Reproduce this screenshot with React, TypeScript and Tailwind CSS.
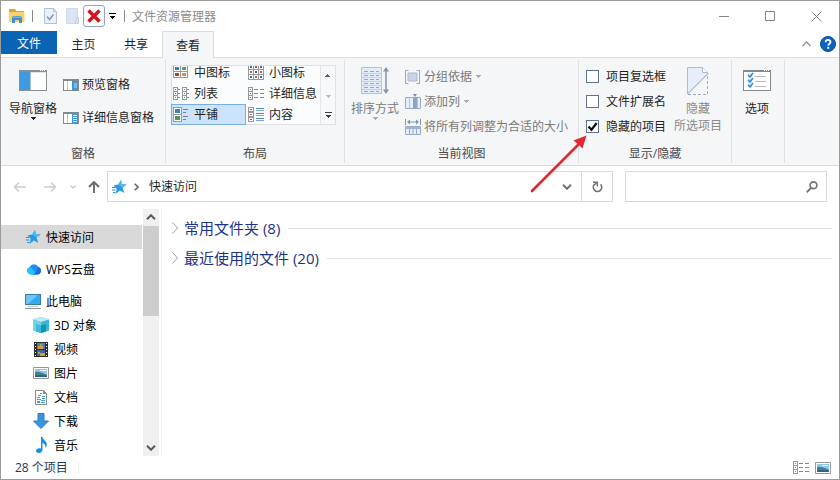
import { useState } from "react";
import type { ReactNode } from "react";

/* ---------- title bar ---------- */

function FolderIcon() {
  return (
    <svg width="16" height="14" viewBox="0 0 16 14">
      <path d="M0 0h6l1.500 2H15v4H0z" fill="#e0a22f" />
      <path d="M0 3h15.500v10H0z" fill="#fbd265" />
      <path d="M3 14V9a2 2 0 0 1 2-2h6a2 2 0 0 1 2 2v5h-3v-3H6v3z" fill="#3f8fce" />
      <path d="M4 7.500h8v1.500H4z" fill="#6fb4e6" />
    </svg>
  );
}

function CheckedPageIcon() {
  return (
    <svg width="13" height="16" viewBox="0 0 13 16" fill="none">
      <path d="M.5.5h9l3 3v12H.5z" fill="#e9f0fa" stroke="#b3c0d6" />
      <path d="M9.500.5v3h3" stroke="#b3c0d6" />
      <path d="M3 8.500l2.500 3 4-5" stroke="#8796b8" strokeWidth="1.500" />
    </svg>
  );
}

function BlankPageIcon() {
  return (
    <svg width="14" height="16" viewBox="0 0 14 16" fill="none">
      <path d="M.5.5h11v15H.5z" fill="#dbe4f2" stroke="#cfd9ea" />
      <path d="M10.500 9.500h2v6h-3z" fill="#dbe4f2" stroke="#c3cfe2" />
    </svg>
  );
}

function TitleBar() {
  const control = "flex h-full w-[46px] items-center justify-center";
  return (
    <header className="flex h-[30px] items-center">
      <div className="flex flex-1 items-center pl-2">
        <FolderIcon />
        <span className="ml-[7px] h-3 w-px bg-[#8d8d8d]" />
        <button aria-label="属性" className="ml-[11px]">
          <CheckedPageIcon />
        </button>
        <button aria-label="新建文件夹" className="ml-[9px]">
          <BlankPageIcon />
        </button>
        <button
          aria-label="删除"
          className="ml-[3px] flex size-[22px] items-center justify-center rounded-[3px] border border-[#8fa6c4] bg-white"
        >
          <svg width="14" height="14" viewBox="0 0 14 14">
            <path d="M1.500 1.500l11 11M12.500 1.500l-11 11" stroke="#d6101c" strokeWidth="3.400" />
          </svg>
        </button>
        <button aria-label="自定义快速访问工具栏" className="ml-1">
          <svg width="7" height="6" viewBox="0 0 7 6" shapeRendering="crispEdges">
            <path d="M0 0h7v1H0zM1 3h5v1H1zM2 4h3v1H2zM3 5h1v1H3z" fill="#000" />
          </svg>
        </button>
        <span className="ml-2 h-3 w-px bg-[#8d8d8d]" />
        <h1 className="ml-[7px] text-[#8b8b8b]">文件资源管理器</h1>
      </div>
      <button aria-label="最小化" className={control}>
        <svg width="11" height="11" viewBox="0 0 11 11">
          <path d="M0 5.500h10" stroke="#858585" />
        </svg>
      </button>
      <button aria-label="最大化" className={control}>
        <svg width="11" height="11" viewBox="0 0 11 11">
          <path d="M.5.5h9v9H.5z" fill="none" stroke="#858585" />
        </svg>
      </button>
      <button aria-label="关闭" className={control}>
        <svg width="11" height="11" viewBox="0 0 11 11">
          <path d="M.5.5l10 10M10.500.5l-10 10" stroke="#858585" />
        </svg>
      </button>
    </header>
  );
}

function TabBar() {
  return (
    <nav className="flex h-[27px] border-b border-[#dadbdc]">
      <button className="h-[23px] w-14 bg-[#0b63b4] pt-px text-white">文件</button>
      <button className="h-[26px] w-[53px]">主页</button>
      <button className="h-[26px] w-[52px]">共享</button>
      <button className="-mb-px w-[52px] border border-b-0 border-[#dadbdc] bg-[#f5f6f7]">查看</button>
      <span className="flex-1" />
      <button aria-label="最小化功能区" className="mr-[9px]">
        <svg width="9" height="6" viewBox="0 0 9 6">
          <path d="M.5 5l4-4 4 4" fill="none" stroke="#979797" strokeWidth="1.500" />
        </svg>
      </button>
      <button aria-label="帮助" className="mr-[3px]">
        <svg width="16" height="16" viewBox="0 0 16 16">
          <circle cx="8" cy="8" r="7.500" fill="#0c62c0" stroke="#0a4c98" />
          <path
            d="M5.700 6.200c0-3 4.800-3 4.800-.2 0 1.700-2.300 1.700-2.300 3.600"
            fill="none"
            stroke="#fff"
            strokeWidth="1.800"
          />
          <path d="M7.200 10.900h2v1.900h-2z" fill="#fff" />
        </svg>
      </button>
    </nav>
  );
}

/* ---------- ribbon ---------- */

function NavPaneIcon() {
  return (
    <svg width="28" height="21" viewBox="0 0 28 21" shapeRendering="crispEdges">
      <path d="M0 0h28v21H0z" fill="#8b8f92" />
      <path d="M1 2h26v18H1z" fill="#fff" />
      <path d="M1 2h10v18H1z" fill="#3e9be0" />
      <path d="M11 2h1v18h-1z" fill="#a9bfd0" />
      <path d="M12 2h15v1H12z" fill="#e4e7ea" />
      <path d="M21 0h1v1h-1zM23 0h1v1h-1zM25 0h1v1h-1z" fill="#fff" />
    </svg>
  );
}

function SidePaneIcon({ lined = false }: { lined?: boolean }) {
  return (
    <svg width="16" height="12" viewBox="0 0 16 12" shapeRendering="crispEdges">
      <path d="M0 0h16v12H0z" fill="#85898d" />
      <path d="M1 2h14v9H1z" fill="#fff" />
      <path d="M4 2h1v9H4z" fill="#bcc1c6" />
      <path d="M9 2h6v9H9z" fill="#3e97dc" />
      {lined ? (
        <path d="M10 3h4v1h-4zM10 5h4v1h-4zM10 7h4v1h-4zM10 9h4v1h-4z" fill="#e3f2fc" />
      ) : (
        <path d="M11 4h3v5h-3z" fill="#77bbee" />
      )}
    </svg>
  );
}

function Caret({ color = "#222" }: { color?: string }) {
  return (
    <svg width="5" height="3" viewBox="0 0 5 3" shapeRendering="crispEdges">
      <path d="M0 0h5v1H0zM1 1h3v1H1zM2 2h1v1H2z" fill={color} />
    </svg>
  );
}

type Layout = "medium" | "small" | "list" | "details" | "tiles" | "content";

function Frame({ x, y, w, h, fill }: { x: number; y: number; w: number; h: number; fill: string }) {
  return (
    <g>
      <rect x={x} y={y} width={w} height={h} fill="#96999c" />
      <rect x={x + 1} y={y + 1} width={w - 2} height={h - 2} fill="#fff" />
      <rect x={x + 2} y={y + 2} width={w - 4} height={h - 4} fill={fill} />
    </g>
  );
}

function LayoutIcon({ kind }: { kind: Layout }) {
  return (
    <svg width="16" height="15" viewBox="0 0 16 15" shapeRendering="crispEdges" className="shrink-0">
      {kind === "medium" && (
        <g>
          <Frame x={0} y={0} w={8} h={7} fill="#3b7fb5" />
          <Frame x={7} y={0} w={8} h={7} fill="#5e9a62" />
          <Frame x={0} y={6} w={8} h={7} fill="#c0392b" />
          <Frame x={7} y={6} w={8} h={7} fill="#c99a3b" />
        </g>
      )}
      {kind === "small" &&
        [0, 5, 10].map((y) =>
          [0, 5, 10].map((x) => (
            <Frame key={`${x}-${y}`} x={x} y={y - 1} w={6} h={6} fill={(x + y) % 10 ? "#c0504a" : "#3f6f9e"} />
          )),
        )}
      {kind === "list" &&
        [0, 9].map((x) => (
          <g key={x}>
            {[1, 5, 9].map((y) => (
              <Frame key={y} x={x} y={y} w={5} h={5} fill="#6e7a86" />
            ))}
            <path d={`M${x + 5} 3h2v1h-2zM${x + 5} 7h2v1h-2zM${x + 5} 11h2v1h-2z`} fill="#85898d" />
          </g>
        ))}
      {kind === "details" && (
        <g>
          {[1, 5, 9].map((y) => (
            <Frame key={y} x={0} y={y} w={5} h={5} fill="#6e7a86" />
          ))}
          {[3, 7, 11].map((y) => (
            <path key={y} d={`M6 ${y}h4v1H6zM12 ${y}h4v1h-4z`} fill="#85898d" />
          ))}
        </g>
      )}
      {kind === "tiles" && (
        <g>
          <Frame x={0} y={0} w={9} h={8} fill="#3c83bd" />
          <Frame x={0} y={7} w={9} h={8} fill="#5b9450" />
          <path d="M10 2h5v1h-5zM10 5h3v1h-3zM10 9h5v1h-5zM10 12h3v1h-3z" fill="#75818c" />
        </g>
      )}
      {kind === "content" && (
        <g>
          <Frame x={0} y={0} w={6} h={5} fill="#3c6d9d" />
          <Frame x={0} y={5} w={6} h={5} fill="#b0473f" />
          <Frame x={0} y={10} w={6} h={5} fill="#3c6d9d" />
          <path d="M8 1h8v1H8zM8 6h8v1H8zM8 11h8v1H8z" fill="#4d87c0" />
          <path d="M8 3h8v1H8zM8 8h8v1H8zM8 13h8v1H8z" fill="#7ea6cd" />
        </g>
      )}
    </svg>
  );
}

function SortIcon() {
  return (
    <svg width="28" height="28" viewBox="0 0 28 28" fill="none">
      <path d="M.5.5h20v26H.5z" fill="#e3edfa" stroke="#b4c3dd" />
      <path d="M1 6.500h19M1 10.500h19M1 14.500h19M1 18.500h19M1 22.500h19" stroke="#c3d0e6" />
      <path
        d="M3 4.500h4m2 0h4m2 0h3M3 8.500h4m2 0h4m2 0h3M3 12.500h4m2 0h4m2 0h3M3 16.500h4m2 0h4m2 0h3M3 20.500h4m2 0h4m2 0h3M3 24.500h4m2 0h4m2 0h3"
        stroke="#93a6ca"
      />
      <path d="M25 3v21" stroke="#8793a8" strokeWidth="1.500" />
      <path d="M22 4.500L25 0l3 4.500zM22 22.500l3 4.500 3-4.500z" fill="#8793a8" />
    </svg>
  );
}

function GroupByIcon() {
  return (
    <svg width="15" height="14" viewBox="0 0 15 14" fill="none">
      <path d="M3.500.5h-3v13h3M11.500.5h3v13h-3" stroke="#9aa7bf" />
      <path d="M3 3h9v8H3z" fill="#c6d3e8" stroke="#aab9d3" />
    </svg>
  );
}

function AddColumnIcon() {
  return (
    <svg width="16" height="15" viewBox="0 0 16 15" fill="none">
      <path d="M.5 3.500h15v11H.5z" fill="#e6eefa" stroke="#9aabc9" />
      <path d="M4.500 4v10M12.500 4v10" stroke="#b6c4dc" />
      <path d="M8 4h4v10H8z" fill="#8ea3c8" />
      <path d="M8 0h4l-2 3z" fill="#7f8ba1" />
    </svg>
  );
}

function FitColumnsIcon() {
  return (
    <svg width="16" height="16" viewBox="0 0 16 16" fill="none">
      <path d="M.5 0v6M15.500 0v6M3 3h10" stroke="#8391ab" />
      <path d="M5 .5L2 3l3 2.500zM11 .5L14 3l-3 2.500z" fill="#8391ab" />
      <path d="M.5 7.500h15v8H.5z" fill="#e6eefa" stroke="#9aabc9" />
      <path d="M1 9h14" stroke="#9db2d6" strokeWidth="2" />
      <path d="M4.500 10v5M8 10v5M11.500 10v5" stroke="#9aabc9" />
    </svg>
  );
}

function HidePageIcon() {
  return (
    <svg width="22" height="28" viewBox="0 0 22 28" fill="none">
      <path d="M.5 27V.5h15l5 5V8L1 27z" fill="#e6eefa" />
      <path d="M.5 27V.5h15l5 5V7" stroke="#aebcd6" />
      <path d="M15.500.5v5h5" fill="#fff" stroke="#aebcd6" />
      <path d="M21 6.500L.5 27" stroke="#8f9db8" />
      <path d="M20.500 9v18.500H1" stroke="#9fabc0" strokeDasharray="3 2" />
    </svg>
  );
}

function OptionsIcon() {
  return (
    <svg width="28" height="21" viewBox="0 0 28 21" fill="none">
      <path d="M0 0h28v21H0z" fill="#85898d" />
      <path d="M1 2h26v18H1z" fill="#fff" />
      <path d="M21 .5h1M23 .5h1M25 .5h1" stroke="#fff" />
      <path d="M5 3.500h4v4H5zM5 8.500h4v4H5zM5 13.500h4v4H5z" fill="#c4e0f5" />
      <path d="M5 5l2 2 3-4M5 10l2 2 3-4M5 15l2 2 3-4" stroke="#2f86cc" strokeWidth="1.400" />
      <path d="M12 6.500h11M12 11.500h11M12 16.500h11" stroke="#b9bdc1" />
    </svg>
  );
}

function Group({ title, className, children }: { title?: string; className: string; children: ReactNode }) {
  return (
    <section className={`my-[2px] flex shrink-0 flex-col border-r border-[#e0e1e3] ${className}`}>
      <div className="flex h-[85px] items-start">{children}</div>
      <h2 className="text-center text-[#4a4a4a]">{title}</h2>
    </section>
  );
}

const layouts: { kind: Layout; label: string }[] = [
  { kind: "medium", label: "中图标" },
  { kind: "small", label: "小图标" },
  { kind: "list", label: "列表" },
  { kind: "details", label: "详细信息" },
  { kind: "tiles", label: "平铺" },
  { kind: "content", label: "内容" },
];

function LayoutGallery() {
  const [selected, setSelected] = useState<Layout>("tiles");
  return (
    <div className="ml-[5px] mt-[5px] flex h-[60px] w-[165px] border border-[#dfe1e4] bg-[#fbfcfd]">
      <div className="-mb-px -ml-px flex flex-1 flex-col justify-end overflow-hidden">
        <div className="grid grid-cols-[75px_1fr]">
          {layouts.map(({ kind, label }) => (
            <button
              key={kind}
              onClick={() => setSelected(kind)}
              className={`flex h-[21px] items-center gap-[5px] whitespace-nowrap border pl-px ${
                kind === selected ? "border-[#7aaee0] bg-[#cce4fb]" : "border-transparent"
              }`}
            >
              <LayoutIcon kind={kind} />
              {label}
            </button>
          ))}
        </div>
      </div>
      <div className="flex w-[15px] flex-col border-l border-[#e3e5e8] bg-[#f7f8f9]">
        <button aria-label="上一行" className="flex h-5 rotate-180 items-center justify-center">
          <Caret color="#5b6169" />
        </button>
        <button aria-label="下一行" className="flex h-5 items-center justify-center">
          <Caret color="#b9bcc1" />
        </button>
        <button aria-label="其他" className="flex h-[18px] items-center justify-center">
          <svg width="7" height="6" viewBox="0 0 7 6" shapeRendering="crispEdges">
            <path d="M0 0h7v1H0zM1 3h5v1H1zM2 4h3v1H2zM3 5h1v1H3z" fill="#3a3f46" />
          </svg>
        </button>
      </div>
    </div>
  );
}

function ToggleOption({ label, initial = false }: { label: string; initial?: boolean }) {
  const [on, setOn] = useState(initial);
  return (
    <label className="flex h-[25px] items-center gap-[7px] whitespace-nowrap">
      <span className="grid size-[13px]">
        <input
          type="checkbox"
          checked={on}
          onChange={() => setOn(!on)}
          className="col-start-1 row-start-1 size-[13px] appearance-none border border-[#5f7390] bg-white"
        />
        {on && (
          <svg width="13" height="13" viewBox="0 0 13 13" className="pointer-events-none col-start-1 row-start-1">
            <path d="M2.500 6.500l3 3.200L10.700 3" fill="none" stroke="#111" strokeWidth="2.200" />
          </svg>
        )}
      </span>
      {label}
    </label>
  );
}

function Ribbon() {
  const big = "flex flex-col items-center whitespace-nowrap";
  const dim = "flex h-[25px] items-center whitespace-nowrap text-[#7a7a7a]";
  return (
    <div className="flex h-[108px] border-b border-[#d8d9da] bg-[#f5f6f7]">
      <Group title="窗格" className="w-[165px]">
        <button className={`${big} ml-2 mt-[10px]`}>
          <NavPaneIcon />
          <span className="mt-[9px]">导航窗格</span>
          <Caret />
        </button>
        <div className="ml-[6px] mt-2 flex flex-col">
          <button className="flex h-[33px] items-center gap-[3px]">
            <SidePaneIcon />
            预览窗格
          </button>
          <button className="flex h-[33px] items-center gap-[3px]">
            <SidePaneIcon lined />
            详细信息窗格
          </button>
        </div>
      </Group>
      <Group title="布局" className="w-[179px]">
        <LayoutGallery />
      </Group>
      <Group title="当前视图" className="w-[234px]">
        <button disabled className={`${big} ml-[6px] mt-[7px] text-[#7a7a7a]`}>
          <SortIcon />
          <span className="mt-[5px]">排序方式</span>
          <Caret color="#a9abae" />
        </button>
        <div className="ml-[6px] mt-1 flex flex-col items-start">
          <button disabled className={`${dim} gap-1`}>
            <GroupByIcon />
            分组依据
            <Caret color="#a9abae" />
          </button>
          <button disabled className={`${dim} gap-[3px]`}>
            <AddColumnIcon />
            <span className="mr-px">添加列</span>
            <Caret color="#a9abae" />
          </button>
          <button disabled className={`${dim} gap-[3px]`}>
            <FitColumnsIcon />
            将所有列调整为合适的大小
          </button>
        </div>
      </Group>
      <Group title="显示/隐藏" className="w-[153px]">
        <div className="ml-[7px] mt-1 flex flex-col">
          <ToggleOption label="项目复选框" />
          <ToggleOption label="文件扩展名" />
          <ToggleOption label="隐藏的项目" initial />
        </div>
        <button disabled className={`${big} ml-2 mt-[7px] text-[#8a8a8a]`}>
          <HidePageIcon />
          <span className="mt-[5px]">隐藏</span>
          <span>所选项目</span>
        </button>
      </Group>
      <Group className="w-[53px]">
        <button className={`${big} ml-[11px] mt-[10px]`}>
          <OptionsIcon />
          <span className="mt-[9px]">选项</span>
        </button>
      </Group>
    </div>
  );
}

/* ---------- address row ---------- */

function StarIcon() {
  return (
    <svg width="15" height="14" viewBox="0 0 15 14">
      <path d="M9 0l.8 4.200 4.700.3-4 3 1.700 5.500-4.400-2.500L3.500 14l1.300-5L1.500 5.500l4.700-1z" fill="#259be6" />
      <path d="M9 0l.8 4.200 4.700.3-4 3L6.200 4.500z" fill="#4fb9f4" />
      <path d="M0 7.500h3M0 10h3.500M1 12.500h2.500" stroke="#2f8fd4" />
    </svg>
  );
}

function Chevron({ color, weight = 2 }: { color: string; weight?: number }) {
  return (
    <svg width="10" height="6" viewBox="0 0 10 6">
      <path d="M1 .8l4 4 4-4" fill="none" stroke={color} strokeWidth={weight} />
    </svg>
  );
}

function AddressRow() {
  return (
    <div className="flex h-[43px] px-3 pt-[5px]">
      <div className="flex h-[31px] items-center">
        <button disabled aria-label="后退">
          <svg width="14" height="10" viewBox="0 0 14 10" fill="none">
            <path d="M6 .5L1.500 5 6 9.500M1.500 5H13" stroke="#cdcdcd" strokeWidth="1.500" />
          </svg>
        </button>
        <button disabled aria-label="前进" className="ml-4">
          <svg width="14" height="10" viewBox="0 0 14 10" fill="none">
            <path d="M8 .5L12.500 5 8 9.500M1 5h11.500" stroke="#cdcdcd" strokeWidth="1.500" />
          </svg>
        </button>
        <button disabled aria-label="最近浏览的位置" className="ml-[13px]">
          <svg width="6" height="4" viewBox="0 0 6 4" fill="none">
            <path d="M.5.5L3 3 5.500.5" stroke="#cdcdcd" strokeWidth="1.300" />
          </svg>
        </button>
        <button aria-label="上移" className="ml-3">
          <svg width="12" height="12" viewBox="0 0 12 12" fill="none">
            <path d="M1 6l5-5 5 5M6 1v11" stroke="#6a6a6a" strokeWidth="1.900" />
          </svg>
        </button>
      </div>
      <div className="ml-[7px] flex h-[31px] flex-1 border border-[#d9d9d9]">
        <div className="flex flex-1 items-center pl-1">
          <StarIcon />
          <svg width="5" height="8" viewBox="0 0 5 8" className="ml-[7px]">
            <path d="M.7.8L4 4 .7 7.200" fill="none" stroke="#666" strokeWidth="1.600" />
          </svg>
          <button className="ml-[10px]">快速访问</button>
        </div>
        <button aria-label="以前的位置" className="flex w-7 items-center justify-center">
          <Chevron color="#747474" />
        </button>
        <button
          aria-label="刷新"
          className="flex w-[31px] items-center justify-center border-l border-[#d9d9d9]"
        >
          <svg width="11" height="12" viewBox="0 0 11 12" fill="none">
            <path d="M2.600 3.200A4.200 4.200 0 1 0 8.600 3.400" stroke="#747474" strokeWidth="1.600" />
            <path d="M1 1.200h4.300v4.300" stroke="#747474" strokeWidth="1.500" />
            <path d="M5.300 1.200L2.500 3.800" stroke="#747474" strokeWidth="1.300" />
          </svg>
        </button>
      </div>
      <div className="ml-3 flex h-[31px] w-[202px] items-center border border-[#d9d9d9]">
        <input type="search" aria-label="搜索" className="h-full min-w-0 flex-1 px-2 outline-none" />
        <button aria-label="开始搜索" className="mr-2">
          <svg width="12" height="12" viewBox="0 0 12 12" fill="none">
            <circle cx="7.500" cy="4.300" r="3.400" stroke="#747474" strokeWidth="1.700" />
            <path d="M5 7L.7 11.300" stroke="#747474" strokeWidth="1.900" />
          </svg>
        </button>
      </div>
    </div>
  );
}

/* ---------- navigation tree ---------- */

function CloudIcon() {
  return (
    <svg width="15" height="12" viewBox="0 0 14 12" preserveAspectRatio="none">
      <path d="M4 11.500a4 4 0 0 1-.6-7.500 4.300 4.300 0 0 1 8-.2A4 4 0 0 1 10.500 11.500z" fill="#1f8ff5" />
      <path d="M4 11.500a4 4 0 0 1-.6-7.500c2.600.2 3.600 5 7 7.500z" fill="#22c3f2" />
      <path d="M6 11.500c3.500-1 4.500-4 5.400-7.700a4 4 0 0 1-.9 7.700z" fill="#2464e8" />
    </svg>
  );
}

function ComputerIcon() {
  return (
    <svg width="16" height="15" viewBox="0 0 16 15">
      <path d="M0 0h16v11H0z" fill="#3a78a8" />
      <path d="M1 1h14v9H1z" fill="#36a9ee" />
      <path d="M1 1h12L3 10H1z" fill="#6cc6f7" />
      <path d="M3 12h10v1H3z" fill="#c3c9ce" />
      <path d="M0 14.500h16" stroke="#8b949c" />
    </svg>
  );
}

function CubeIcon() {
  return (
    <svg width="16" height="16" viewBox="0 0 16 16">
      <path d="M8 0l8 2.500v11L8 16l-8-2.500v-11z" fill="#35b6d2" />
      <path d="M8 0L0 2.500 8 5l8-2.500z" fill="#bfeaf2" />
      <path d="M0 2.500L8 5v11l-8-2.500z" fill="#74d2e4" />
      <path d="M3 7l5 1.500V16l-5-1.500z" fill="#3dbad6" />
      <path d="M8 8.500L13 7v7.500L8 16z" fill="#1592b4" />
    </svg>
  );
}

function FilmIcon() {
  return (
    <svg width="14" height="15" viewBox="0 0 14 15" shapeRendering="crispEdges">
      <path d="M0 0h14v15H0z" fill="#2b2b2b" />
      <path d="M3 1h8v6H3z" fill="#4a7cc4" />
      <path d="M3 8h8v6H3z" fill="#3d65a8" />
      <path d="M4 4h5v3H4zM6 11h5v3H6z" fill="#d89b3c" />
      <path d="M6 2h2v2H6zM4 10h2v2H4z" fill="#8bb457" />
      {[1, 4, 7, 10, 13].map((y) => (
        <path key={y} d={`M1 ${y}h1v1H1zM12 ${y}h1v1h-1z`} fill="#fff" />
      ))}
    </svg>
  );
}

function PictureIcon() {
  return (
    <svg width="16" height="12" viewBox="0 0 16 12">
      <path d="M.5.5h15v11H.5z" fill="#fff" stroke="#969696" />
      <path d="M2 2h12v8H2z" fill="#8ec8ee" />
      <path d="M2 5c4-1 8 1 12 3v2H2z" fill="#467f86" />
      <path d="M2 8.500c4-1 8-.5 12 0V10H2z" fill="#2d5f94" />
      <path d="M7 3h6v1H7z" fill="#e8f5fd" />
    </svg>
  );
}

function DocumentIcon() {
  return (
    <svg width="12" height="15" viewBox="0 0 12 15" shapeRendering="crispEdges">
      <path d="M0 0h9v1h1v1h1v1h1v12H0z" fill="#8d8d8d" />
      <path d="M1 1h7v3h3v10H1z" fill="#fff" />
      <path d="M5 3h2v1H5zM3 5h3v1H3zM2 7h3v1H2zM7 6h3v1H7zM7 8h3v1H7zM2 9h4v1H2zM2 11h3v2H2zM6 10h4v1H6zM6 12h4v1H6z" fill="#3f9bd8" />
    </svg>
  );
}

function DownloadIcon() {
  return (
    <svg width="16" height="16" viewBox="0 0 16 16">
      <path d="M5 .5h6V8h4.500L8 15.500.5 8H5z" fill="#3a94de" stroke="#2d7cc2" />
    </svg>
  );
}

function MusicIcon() {
  return (
    <svg width="11" height="16" viewBox="0 0 11 16">
      <path d="M5 0h1.500c.3 3 4.500 4 4.300 7.500 0 1.700-.8 3-1.600 3.500.8-3-.7-4.500-2.700-5v7c0 3.500-6.500 4.200-6.500.8 0-2.300 3-3.200 5-2.300z" fill="#1592e6" />
    </svg>
  );
}

const places: { label: string; icon: ReactNode; style: string; active?: boolean }[] = [
  { label: "快速访问", icon: <StarIcon />, style: "pl-6 mb-2 bg-[#d9d9d9]", active: true },
  { label: "WPS云盘", icon: <CloudIcon />, style: "pl-6 mb-2" },
  { label: "此电脑", icon: <ComputerIcon />, style: "pl-6" },
  { label: "3D 对象", icon: <CubeIcon />, style: "pl-8" },
  { label: "视频", icon: <FilmIcon />, style: "pl-8" },
  { label: "图片", icon: <PictureIcon />, style: "pl-8" },
  { label: "文档", icon: <DocumentIcon />, style: "pl-8" },
  { label: "下载", icon: <DownloadIcon />, style: "pl-8" },
  { label: "音乐", icon: <MusicIcon />, style: "pl-8" },
];

function Sidebar() {
  return (
    <aside className="flex w-[161px] shrink-0 border-r border-[#f1f1f1]">
      <ul className="flex-1 overflow-hidden pt-4">
        {places.map(({ label, icon, style, active }) => (
          <li key={label}>
            <button
              aria-current={active ? "page" : undefined}
              className={`flex h-6 w-full items-center gap-[5px] text-black ${style}`}
            >
              <span className="flex w-4 justify-center">{icon}</span>
              {label}
            </button>
          </li>
        ))}
      </ul>
      <div className="ml-px mr-[2px] flex w-4 flex-col bg-[#f0f0f0]">
        <button aria-label="向上滚动" className="flex h-[17px] rotate-180 items-center justify-center">
          <Chevron color="#5a5a5a" />
        </button>
        <div className="h-[90px] bg-[#cdcdcd]" />
        <span className="flex-1" />
        <button aria-label="向下滚动" className="flex h-[17px] items-center justify-center">
          <Chevron color="#5a5a5a" />
        </button>
      </div>
    </aside>
  );
}

function Section({ label }: { label: string }) {
  return (
    <button className="flex h-[30px] w-full items-center text-[15px] text-[#1e3287]">
      <svg width="6" height="12" viewBox="0 0 6 12">
        <path d="M.5.5L5.500 6 .5 11.500" fill="none" stroke="#9a9a9a" />
      </svg>
      <span className="ml-[6px]">{label}</span>
      <span className="ml-2 h-px flex-1 bg-[#e2e2e2]" />
    </button>
  );
}

function StatusBar() {
  return (
    <footer className="flex h-[23px] items-center pl-[14px] pr-2">
      <span className="text-[#1e395b]">28 个项目</span>
      <span className="ml-[10px] h-3 w-px bg-[#f0f0f0]" />
      <span className="flex-1" />
      <button aria-label="详细信息视图">
        <LayoutIcon kind="details" />
      </button>
      <button aria-label="缩略图视图" className="ml-[6px]">
        <PictureIcon />
      </button>
    </footer>
  );
}

function PointerArrow() {
  return (
    <svg width="60" height="60" viewBox="0 0 60 60" className="pointer-events-none absolute left-[528px] top-[133px]">
      <path d="M3 57L50 10" stroke="#e32630" strokeWidth="2.600" strokeLinecap="round" />
      <path d="M57.500 1.500l-4 13-4-4-5-4z" fill="#e32630" />
    </svg>
  );
}

export default function App() {
  return (
    <div className="relative flex h-screen flex-col overflow-hidden border border-[#9b9b9b] bg-white font-['Open_Sans','Noto_Sans_CJK_SC',sans-serif] text-[12px] leading-[17px] text-[#1f1f1f]">
      <TitleBar />
      <TabBar />
      <Ribbon />
      <AddressRow />
      <div className="flex min-h-0 flex-1">
        <Sidebar />
        <main className="flex-1 pl-[10px] pr-[7px] pt-1">
          <Section label="常用文件夹 (8)" />
          <Section label="最近使用的文件 (20)" />
        </main>
      </div>
      <StatusBar />
      <PointerArrow />
    </div>
  );
}
